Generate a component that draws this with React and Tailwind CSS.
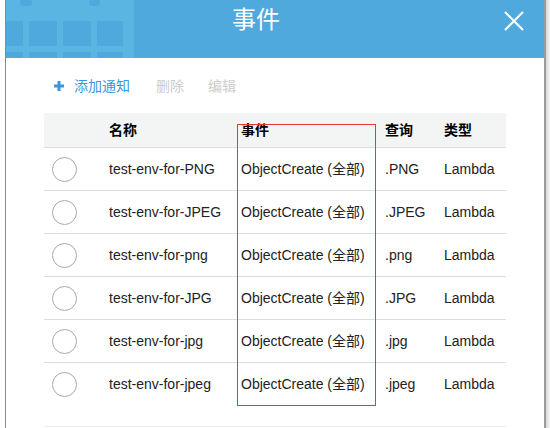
import React from 'react';

const rows = [
  { name: 'test-env-for-PNG', query: '.PNG' },
  { name: 'test-env-for-JPEG', query: '.JPEG' },
  { name: 'test-env-for-png', query: '.png' },
  { name: 'test-env-for-JPG', query: '.JPG' },
  { name: 'test-env-for-jpg', query: '.jpg' },
  { name: 'test-env-for-jpeg', query: '.jpeg' },
];

function CalendarArt() {
  const cols = [0, 23, 57, 91];
  const widths = [17, 28, 28, 26];
  return (
    <svg width="128" height="58" viewBox="0 0 128 58" className="absolute left-0 top-0">
      <rect x="0" y="0" width="128" height="58" fill="#5ab5e2" />
      <rect x="14" y="-4" width="12" height="10" rx="3" fill="#4fa9dc" />
      <rect x="83" y="-4" width="11" height="10" rx="3" fill="#4fa9dc" />
      {cols.map((x, i) => (
        <g key={i}>
          <rect x={x} y="21" width={widths[i]} height="25" fill="#4fa9dc" />
          <rect x={x} y="52" width={widths[i]} height="10" fill="#4fa9dc" />
        </g>
      ))}
    </svg>
  );
}

export default function App() {
  return (
    <div
      className="w-[550px] h-[428px] bg-white flex overflow-hidden"
      style={{ fontFamily: '"Liberation Sans", "Noto Sans CJK SC", sans-serif' }}
    >
      <div className="w-[5px] shrink-0" />
      {/* ── Dialog ─────────────────────────────────────────── */}
      <div className="w-[541px] shrink-0 flex flex-col border-l border-l-[#8a8a8a] border-r-2 border-r-[#9a9a9a] relative">
        {/* header */}
        <div className="h-[58px] bg-[#4fa9dc] relative flex items-center shrink-0">
          <CalendarArt />
          <div className="absolute left-[226px] top-[5px] text-[24px] text-white leading-[30px]">事件</div>
          <svg width="22" height="22" viewBox="0 0 22 22" className="absolute left-[497px] top-[10px]">
            <path d="M2 2 L20 20 M20 2 L2 20" stroke="#fff" strokeWidth="2" />
          </svg>
        </div>

        {/* toolbar */}
        <div className="flex items-center h-[20px] mt-[18px] ml-[48px] text-[14px]">
          <svg width="10" height="10" viewBox="0 0 10 10" className="mr-[10px]">
            <path d="M5 0 V10 M0 5 H10" stroke="#3b97d8" strokeWidth="3" />
          </svg>
          <span className="text-[#3b97d8]">添加通知</span>
          <span className="text-[#cccccc] ml-[26px]">删除</span>
          <span className="text-[#cccccc] ml-[24px]">编辑</span>
        </div>

        {/* table */}
        <div className="ml-[38px] w-[462px] mt-[17px] text-[14px] text-[#222]">
          <div className="flex items-center h-[35px] bg-[#f3f5f5] border-b border-[#dddddd] font-bold text-black">
            <div className="w-[65px]" />
            <div className="w-[132px]">名称</div>
            <div className="w-[144px]">事件</div>
            <div className="w-[59px]">查询</div>
            <div>类型</div>
          </div>
          {rows.map((r, i) => (
            <div
              key={r.name}
              className={`flex items-center h-[43px] ${i < rows.length - 1 ? 'border-b border-[#dddddd]' : ''}`}
            >
              <div className="w-[65px] flex pl-[8px]">
                <div className="w-[25px] h-[25px] rounded-full border border-[#aaaaaa]" />
              </div>
              <div className="w-[132px]">{r.name}</div>
              <div className="w-[144px]">ObjectCreate (全部)</div>
              <div className="w-[59px]">{r.query}</div>
              <div>Lambda</div>
            </div>
          ))}
          <div className="h-[21px] border-b border-[#eeeeee]" />
        </div>

        {/* annotation */}
        <div className="absolute left-[231px] top-[124px] w-[139px] h-[282px] border border-[#e53935]" />
      </div>
      <div className="w-[4px] shrink-0 bg-gradient-to-r from-[#d8d8d8] to-[#f8f8f8]" />
    </div>
  );
}
